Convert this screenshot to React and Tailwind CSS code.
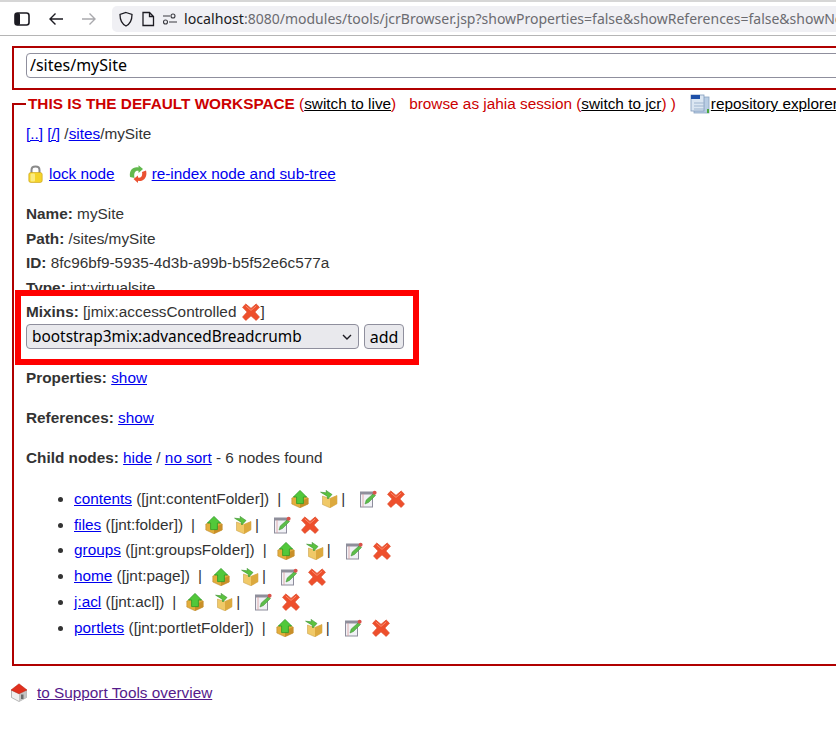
import React from "react";

const linkCls = "text-[#0000ee] underline";

const UpIcon = () => (
  <svg width="18" height="18" viewBox="0 0 18 18" className="shrink-0">
    <path d="M0.8 8 L9 4.5 L17.2 8 V14 L9 17.8 L0.8 14 Z" fill="#e3ae3c" stroke="#b47f24" strokeWidth="0.5" />
    <path d="M9 11.5 L17.2 8 V14 L9 17.8 Z" fill="#c98f28" />
    <path d="M9 0.4 L15.6 7 H12.4 V13.6 H5.6 V7 H2.4 Z" fill="#52c83a" stroke="#2c9a24" strokeWidth="0.8" strokeLinejoin="round" />
  </svg>
);

const BoxIcon = () => (
  <svg width="18" height="18" viewBox="0 0 18 18" className="shrink-0">
    <path d="M2.5 6 L9.5 8.5 L17 5.5 V13.8 L10 17.8 L2.5 14.5 Z" fill="#f0c968" stroke="#c3973c" strokeWidth="0.5" />
    <path d="M10 8.5 L17 5.5 V13.8 L10 17.8 Z" fill="#dca93e" />
    <path d="M0.6 2.2 L6.5 2.8 L6 0.4 L12 4.5 L7.8 9 L7.2 6.2 Z" fill="#5cc23f" stroke="#36902b" strokeWidth="0.6" strokeLinejoin="round" />
  </svg>
);

const EditIcon = () => (
  <svg width="18" height="18" viewBox="0 0 18 18" className="shrink-0">
    <rect x="1.5" y="2" width="12" height="15" fill="#f1f1f6" stroke="#8d8d9c" strokeWidth="1" />
    <rect x="1.5" y="2" width="12" height="2.5" fill="#8f8f9b" />
    <path d="M4 4 V17" stroke="#dca0a0" strokeWidth="0.8" />
    <path d="M6 14 L7.2 10 L14.5 3.5 L16.5 5.5 L9.5 12.5 Z" fill="#5cbd4a" stroke="#3d8f30" strokeWidth="0.5" />
    <circle cx="15.6" cy="2.8" r="2" fill="#d8524a" />
  </svg>
);

const CrossIcon = () => (
  <svg width="18" height="18" viewBox="0 0 18 18" className="shrink-0">
    <path d="M3.8 1 L9 5.4 L14.2 1 L17.4 4.2 L12.8 9 L17.4 14 L14.2 17.4 L9 12.8 L3.8 17.4 L0.6 14 L5.2 9 L0.6 4.2 Z" fill="#ee4f2c" stroke="#e04a28" strokeWidth="0.8" strokeLinejoin="round" />
    <path d="M3.8 3 L9 7.4 L14.2 3" fill="none" stroke="#f88e70" strokeWidth="1" />
  </svg>
);

const LockIcon = () => (
  <svg width="15" height="18" viewBox="0 0 15 18" className="shrink-0">
    <path d="M3.5 8 V5 C3.5 0.4 11.5 0.4 11.5 5 V8" fill="none" stroke="#8a8a8a" strokeWidth="2" />
    <rect x="0.8" y="7.5" width="13.4" height="10" rx="2" fill="#f4d32a" stroke="#c79f16" strokeWidth="0.6" />
    <rect x="2.5" y="8.5" width="4.5" height="8" rx="1" fill="#fbeb80" />
  </svg>
);

const ReindexIcon = () => (
  <svg width="18" height="18" viewBox="0 0 18 18" className="shrink-0">
    <path d="M1 12 C0 5 4 1.5 9.5 2.5 L9.5 0.2 L14 4 L9.5 8 L9.5 5.8 C6.5 5.2 4.5 7.5 5.5 13 Z" fill="#62b94e" />
    <path d="M17 5.5 C18.8 12 14.5 17 9 15.8 L9 18 L4.5 14 L9 10.5 L9 12.6 C12 13.2 13.8 11 13 7 Z" fill="#ea5232" />
  </svg>
);

const RepoIcon = () => (
  <svg width="20" height="20" viewBox="0 0 20 20" className="shrink-0">
    <rect x="4" y="3" width="15" height="16" fill="#b9cde4" stroke="#8aa3c0" strokeWidth="0.8" />
    <rect x="1" y="1" width="13" height="16" fill="#dbe6f2" stroke="#7f9abb" strokeWidth="0.8" />
    <rect x="1" y="1" width="9" height="4" fill="#1e50a8" />
    <path d="M4 9 H15 M4 12 H15 M4 15 H15" stroke="#9fb5cf" strokeWidth="1" />
    <rect x="17" y="15" width="2" height="4" fill="#4aa83c" />
  </svg>
);

const HomeIcon = () => (
  <svg width="18" height="20" viewBox="0 0 18 20" className="shrink-0">
    <path d="M1.5 7 L9 10.5 L16.5 7 V14.5 L9 18.5 L1.5 14.5 Z" fill="#f0f0f0" stroke="#8c8c8c" strokeWidth="0.6" />
    <path d="M9 10.5 L16.5 7 V14.5 L9 18.5 Z" fill="#c4c4c4" />
    <path d="M1 7 L9 0.8 L17 7 L9 10.8 Z" fill="#e0301e" stroke="#b8200f" strokeWidth="0.5" />
    <rect x="11" y="11.5" width="2.5" height="4.5" fill="#6c6c6c" />
  </svg>
);

const nodes = [
  { name: "contents", type: "jnt:contentFolder" },
  { name: "files", type: "jnt:folder" },
  { name: "groups", type: "jnt:groupsFolder" },
  { name: "home", type: "jnt:page" },
  { name: "j:acl", type: "jnt:acl" },
  { name: "portlets", type: "jnt:portletFolder" },
];

const BrowserBar = () => (
  <div className="h-[36px] border-t-2 border-b border-t-[#d6d6d6] border-b-[#b5b5b5] flex items-center bg-white">
    <svg width="18" height="16" viewBox="0 0 18 16" className="ml-[14px] shrink-0">
      <rect x="1" y="2" width="14" height="12" rx="2.5" fill="none" stroke="#1c1b22" strokeWidth="1.6" />
      <rect x="1" y="2" width="5" height="12" rx="1.5" fill="#1c1b22" />
    </svg>
    <svg width="16" height="16" viewBox="0 0 16 16" className="ml-[16px] shrink-0">
      <path d="M15 8 H2 M7.5 2.5 L2 8 L7.5 13.5" fill="none" stroke="#1c1b22" strokeWidth="1.4" />
    </svg>
    <svg width="16" height="16" viewBox="0 0 16 16" className="ml-[17px] shrink-0">
      <path d="M1 8 H14 M8.5 2.5 L14 8 L8.5 13.5" fill="none" stroke="#a9a9ad" strokeWidth="1.4" />
    </svg>
    <div className="ml-[15px] flex-1 h-[26px] bg-[#f0f0f4] rounded-l-[5px] flex items-center pl-[5px] min-w-0 overflow-hidden">
      <svg width="16" height="16" viewBox="0 0 16 16" className="ml-[1px] shrink-0">
        <path d="M8 1.5 L14 3.5 C14 9 12 13 8 15 C4 13 2 9 2 3.5 Z" fill="none" stroke="#1c1b22" strokeWidth="1.3" />
      </svg>
      <svg width="14" height="16" viewBox="0 0 14 16" className="ml-[7px] shrink-0">
        <path d="M2 1.5 H8.5 L12.5 5.5 V14.5 H2 Z M8.5 1.5 V5.5 H12.5" fill="none" stroke="#1c1b22" strokeWidth="1.3" />
      </svg>
      <svg width="16" height="12" viewBox="0 0 16 12" className="ml-[7px] shrink-0">
        <circle cx="11" cy="3" r="2" fill="none" stroke="#3a3a40" strokeWidth="1.1" />
        <circle cx="3.5" cy="9" r="2" fill="none" stroke="#3a3a40" strokeWidth="1.1" />
        <path d="M1 3 H8 M7 9 H15" stroke="#3a3a40" strokeWidth="1.1" />
      </svg>
      <span className="ml-[6px] whitespace-nowrap text-[14px] font-['Noto_Sans',sans-serif] text-[#6b6b70]">
        <span className="text-[#1c1b22] text-[14.2px]">localhost</span>:8080/modules/tools/jcrBrowser.jsp?showProperties=false&amp;showReferences=false&amp;showNodes=true
      </span>
    </div>
  </div>
);

const NodeRow = ({ node }) => (
  <li className="h-[25.8px]">
    <div className="flex items-center h-full whitespace-pre">
      <a className={linkCls}>{node.name}</a>
      <span> ([{node.type}])</span>
      <span className="ml-[8px]">|</span>
      <span className="ml-[10px]"><UpIcon /></span>
      <span className="ml-[11px]"><BoxIcon /></span>
      <span className="ml-[3px]">|</span>
      <span className="ml-[14px]"><EditIcon /></span>
      <span className="ml-[10px]"><CrossIcon /></span>
    </div>
  </li>
);

export default function App() {
  return (
    <div className="w-[836px] h-[738px] overflow-hidden bg-white font-['Liberation_Sans',Arial,sans-serif] text-[15.33px] text-[#333]">
      <BrowserBar />

      <div className="w-[900px] ml-[12px] mt-[10px] h-[44px] border-2 border-[#b00000] pt-[5px] pl-[12px] pr-[4px]">
        <input
          readOnly
          value="/sites/mySite"
          className="block w-full h-[25px] px-[3px] pb-[2px] text-[16px] text-black font-['Noto_Sans',sans-serif] border border-[#8f8f9d] rounded-[4px] bg-white outline-none"
        />
      </div>

      <fieldset className="w-[900px] ml-[12px] mt-[2px] h-[574px] border-2 border-[#b00000] pl-[12px]">
        <legend className="px-[2px] leading-[24px] whitespace-nowrap text-[#cc0000]">
          <strong>THIS IS THE DEFAULT WORKSPACE</strong> (<a className="text-black underline">switch to live</a>)
          <span className="ml-[13px]">browse as jahia session (<a className="text-black underline">switch to jcr</a>) )</span>
          <span className="inline-flex items-center align-middle ml-[14px] -mt-[2px]">
            <RepoIcon />
            <a className="text-black underline ml-[1px]">repository explorer</a>
          </span>
        </legend>

        <div className="leading-[20px] pt-[8px]">
          <a className={linkCls}>[..]</a> <a className={linkCls}>[/]</a> /<a className={linkCls}>sites</a>/mySite
        </div>

        <div className="flex items-center mt-[20px] h-[20px] pl-[2px]">
          <LockIcon />
          <a className={`${linkCls} ml-[6px]`}>lock node</a>
          <span className="ml-[14px]"><ReindexIcon /></span>
          <a className={`${linkCls} ml-[5px]`}>re-index node and sub-tree</a>
        </div>

        <div className="mt-[18px] leading-[24.6px]">
          <div><strong>Name:</strong> mySite</div>
          <div><strong>Path:</strong> /sites/mySite</div>
          <div><strong>ID:</strong> 8fc96bf9-5935-4d3b-a99b-b5f52e6c577a</div>
          <div><strong>Type:</strong> jnt:virtualsite</div>
        </div>

        {/* highlight drawn over the Type line */}
        <div className="relative -mt-[10px] -ml-[11px] w-[404px] h-[75px] border-[6px] border-[#ff0000] bg-white pl-[5px] pt-[6px]">
          <div className="flex items-center h-[20px] whitespace-pre">
            <strong>Mixins:</strong> [jmix:accessControlled
            <span className="ml-[6px]"><CrossIcon /></span>]
          </div>
          <div className="flex mt-[2px] gap-[5px]">
            <div className="relative w-[333px] h-[25px]">
              <select className="appearance-none w-full h-full pl-[5px] text-[15.4px] text-black font-['Noto_Sans',sans-serif] bg-[#e9e9ed] border border-[#8f8f9d] rounded-[4px] outline-none">
                <option>bootstrap3mix:advancedBreadcrumb</option>
              </select>
              <svg width="10" height="6" viewBox="0 0 10 6" className="absolute right-[7px] top-[10px] pointer-events-none">
                <path d="M1 1 L5 5 L9 1" fill="none" stroke="#1c1b22" strokeWidth="1.4" />
              </svg>
            </div>
            <button className="w-[40px] h-[25px] text-[16px] text-black font-['Noto_Sans',sans-serif] bg-[#e9e9ed] border border-[#8f8f9d] rounded-[4px]">
              add
            </button>
          </div>
        </div>

        <div className="mt-[3px] leading-[20px]"><strong>Properties:</strong> <a className={linkCls}>show</a></div>
        <div className="mt-[20px] leading-[20px]"><strong>References:</strong> <a className={linkCls}>show</a></div>
        <div className="mt-[20px] leading-[20px]">
          <strong>Child nodes:</strong> <a className={linkCls}>hide</a> / <a className={linkCls}>no sort</a> - 6 nodes found
        </div>

        <ul className="list-disc pl-[48px] mt-[18px]">
          {nodes.map((n) => (
            <NodeRow key={n.name} node={n} />
          ))}
        </ul>
      </fieldset>

      <div className="flex items-center ml-[10px] mt-[17px] h-[20px]">
        <HomeIcon />
        <a className="ml-[9px] text-[#551a8b] underline">to Support Tools overview</a>
      </div>
    </div>
  );
}
